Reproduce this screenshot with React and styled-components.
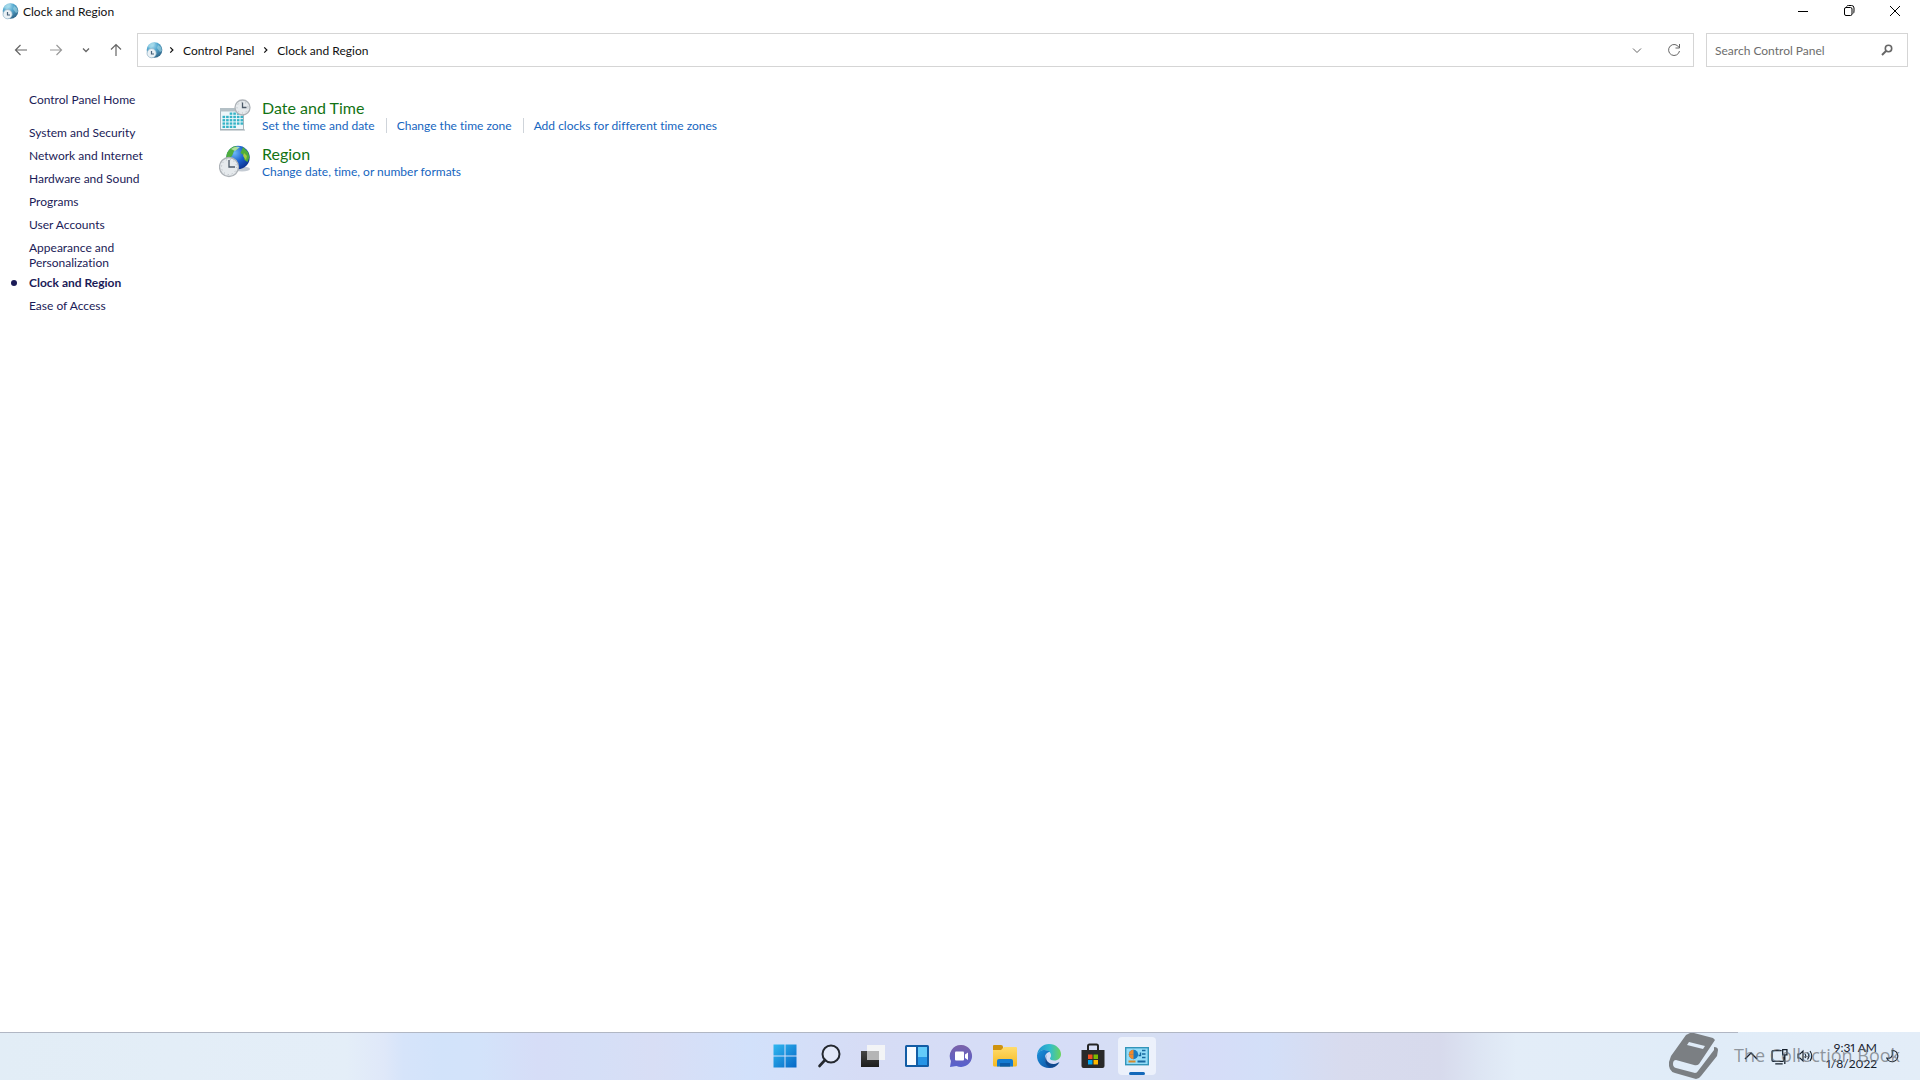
import React from "react";
import styled, { createGlobalStyle } from "styled-components";

const Global = createGlobalStyle`
  *, *::before, *::after { box-sizing: border-box; }
  body { margin: 0; background: #fff; color: #111; font: 12px/15px Lato, "Open Sans", sans-serif; font-variant-ligatures: none; }
  button, input { font: inherit; color: inherit; }
  ul { list-style: none; margin: 0; padding: 0; }
  a { text-decoration: none; color: inherit; }
  svg { display: block; flex: none; }
`;

const Screen = styled.div`
  display: flex;
  flex-direction: column;
  min-height: 100vh;
`;

const TitleBar = styled.header`
  display: flex;
  justify-content: space-between;
  height: 24px;
  padding-right: 2px;
`;

const Title = styled.h1`
  display: flex;
  align-items: center;
  gap: 4px;
  height: 22px;
  margin: 0;
  padding-left: 2px;
  font-size: 12px;
  font-weight: 400;
`;

const Captions = styled.div`
  display: flex;
`;

const IconButton = styled.button`
  display: flex;
  align-items: center;
  justify-content: center;
  flex: none;
  width: ${(p) => p.$w}px;
  height: ${(p) => p.$h || 32}px;
  padding: 0;
  border: 0;
  background: transparent;
  color: ${(p) => p.$color || "#666"};
`;

const NavBar = styled.nav`
  display: flex;
  align-items: center;
  height: 52px;
  padding: 0 12px 0 2px;
`;

const AddressBar = styled.div`
  display: flex;
  align-items: center;
  flex: 1;
  height: 34px;
  margin: 0 12px 0 4px;
  padding-left: 8px;
  border: 1px solid #d5d5d5;
`;

const Crumbs = styled.ol`
  display: flex;
  align-items: center;
  flex: 1;
  gap: 5px;
  list-style: none;
  margin: 0;
  padding: 0 0 0 2px;
`;

const Crumb = styled.li`
  display: flex;
  align-items: center;
  gap: 4px;
  color: #111;
`;

const SearchBox = styled.label`
  display: flex;
  align-items: center;
  width: 202px;
  height: 34px;
  padding: 0 14px 0 8px;
  border: 1px solid #d5d5d5;
  color: #666;
`;

const SearchInput = styled.input`
  flex: 1;
  min-width: 0;
  padding: 0;
  border: 0;
  outline: 0;
  background: transparent;
  &::placeholder { color: #6d6d6d; opacity: 1; }
`;

const Body = styled.div`
  display: flex;
  flex: 1;
`;

const Side = styled.nav`
  width: 219px;
  padding: 16px 72px 0 29px;
  color: #1b1b57;
`;

const SideHome = styled.a`
  display: block;
  margin-bottom: 18px;
  white-space: nowrap;
`;

const SideList = styled.ul`
  display: flex;
  flex-direction: column;
  gap: 8px;
`;

const SideItem = styled.li`
  position: relative;
  font-weight: ${(p) => (p.$current ? 700 : 400)};
  margin-top: ${(p) => (p.$current ? "-3px" : "0")};
  &::before {
    content: "";
    display: ${(p) => (p.$current ? "block" : "none")};
    position: absolute;
    left: -18px;
    top: 5px;
    width: 6px;
    height: 6px;
    border-radius: 50%;
    background: #1b1b57;
  }
`;

const Main = styled.main`
  display: flex;
  flex-direction: column;
  gap: 10px;
  padding-top: 21px;
`;

const Category = styled.section`
  display: flex;
  align-items: flex-end;
  gap: 9px;
  height: 36px;
`;

const CategoryTitle = styled.h2`
  margin: 0;
  color: #137313;
  font-size: 16px;
  line-height: 20px;
  font-weight: 400;
`;

const Tasks = styled.ul`
  display: flex;
  color: #1565c0;
`;

const Task = styled.li`
  & + & {
    margin-left: 11px;
    padding-left: 10px;
    border-left: 1px solid #cfd4da;
  }
`;

const Taskbar = styled.footer`
  display: grid;
  grid-template-columns: 1fr auto 1fr;
  align-items: start;
  height: 48px;
  border-top: 1px solid;
  border-image: linear-gradient(90deg, #b1b7c4 90.5%, transparent 90.5%) 1;
  background: linear-gradient(90deg, #e2edf6 0%, #e4eef8 18%, #dfe8f9 20%, #d6e4fa 21%, #d2e3fa 23%, #d3e3fa 25%, #d6ddf7 28%, #d5dff7 31%, #d8def5 34%, #d2e1fb 39%, #d6dcf5 45%, #d6ddf7 56%, #d6dff3 60%, #d6dcf8 62%, #d3dff8 66%, #d8dbee 70%, #d7daec 75%, #dde5f3 77%, #e3edf8 79%, #e0ecf8 88%, #e3edf8 100%);
`;

const Apps = styled.div`
  grid-column: 2;
  display: flex;
  gap: 6px;
  padding: 4px 0 0 1px;
`;

const AppButton = styled.button`
  position: relative;
  display: flex;
  align-items: center;
  justify-content: center;
  width: 38px;
  height: 38px;
  padding: 0;
  border: 0;
  border-radius: 4px;
  background: ${(p) => (p.$active ? "#ecf1fb" : "transparent")};
  &::after {
    content: "";
    display: ${(p) => (p.$active ? "block" : "none")};
    position: absolute;
    left: 11px;
    bottom: 0;
    width: 16px;
    height: 3px;
    border-radius: 2px;
    background: #1469ba;
  }
`;

const Tray = styled.div`
  position: relative;
  display: flex;
  align-items: center;
  justify-content: flex-end;
  height: 46px;
  padding-right: 19px;
`;

const TrayButton = styled(IconButton)`
  color: #16202c;
`;

const Clock = styled.time`
  width: 56px;
  margin: 0 8px 0 4px;
  line-height: 16px;
  text-align: right;
  font-variant-numeric: proportional-nums;
  color: #16202c;
`;

const Watermark = styled.div`
  position: absolute;
  right: 20px;
  top: 0;
  display: flex;
  align-items: center;
  gap: 14px;
  color: rgba(105, 110, 116, 0.7);
  font: 18px/24px "Open Sans", sans-serif;
  white-space: nowrap;
`;

const WatermarkText = styled.span`
  padding-bottom: 4px;
`;

function Globe() {
  return (
    <svg width="17" height="17" viewBox="0 0 17 17" aria-hidden="true">
      <defs>
        <radialGradient id="gl" cx=".35" cy=".2" r=".9">
          <stop offset="0" stopColor="#b0dff2" /><stop offset=".4" stopColor="#55a9d0" /><stop offset="1" stopColor="#28597c" />
        </radialGradient>
      </defs>
      <circle cx="8.5" cy="8" r="7.8" fill="url(#gl)" />
      <path d="M3 3q3-3 6-2l-1 3-3 2-3-1zM12 3l3 2 1 4-2 1-3-4z" fill="#a5dbe8" opacity=".6" />
      <circle cx="5.600" cy="11.200" r="4.600" fill="#eaf1f5" stroke="#8fb2c6" strokeWidth=".7" />
      <path d="M5.500 9V12H8" fill="none" stroke="#46627a" strokeWidth="1.200" />
    </svg>
  );
}

function Line({ d, size = 16, w = 1 }) {
  return (
    <svg width={size} height={size} viewBox="0 0 16 16" fill="none" stroke="currentColor" strokeWidth={w} aria-hidden="true">
      <path d={d} />
    </svg>
  );
}

function ClockFace({ cx, cy, r }) {
  return (
    <g>
      <circle cx={cx} cy={cy} r={r} fill="#e6eaed" stroke="#aeb3b8" strokeWidth="1.3" />
      <circle cx={cx} cy={cy} r={r - 2} fill="none" stroke="#b3bac0" strokeWidth="1" strokeDasharray="1 3" />
      <path d={`M${cx} ${cy - r + 2.5}V${cy}H${cx + r - 3.5}`} fill="none" stroke="#4d5a68" strokeWidth="1.3" />
    </g>
  );
}

function CalendarIcon() {
  const cells = [];
  for (let y = 0; y < 5; y++)
    for (let x = 0; x < 6; x++)
      if (!(y === 0 && x < 2) && !(y === 4 && x > 3)) cells.push(<rect key={`${x}-${y}`} x={3.5 + x * 3.6} y={13.5 + y * 3.3} width="2.6" height="2.3" fill="#35b3c6" />);
  return (
    <svg width="34" height="34" viewBox="0 0 34 34" aria-hidden="true">
      <rect x="1.5" y="9.5" width="23" height="21" fill="#eef7fa" stroke="#a9b6bd" />
      <path d="M1 9h24v3.500H1z" fill="#b4c0c6" />
      {cells}
      <path d="M1 31h25" stroke="#a2adb3" />
      <ClockFace cx={23.5} cy={8.5} r={7.5} />
    </svg>
  );
}

function RegionIcon() {
  return (
    <svg width="34" height="34" viewBox="0 0 34 34" aria-hidden="true">
      <defs>
        <radialGradient id="rg" cx=".35" cy=".3" r=".8">
          <stop offset="0" stopColor="#6fb9f5" /><stop offset=".5" stopColor="#1c62cf" /><stop offset="1" stopColor="#0b2c86" />
        </radialGradient>
      </defs>
      <ellipse cx="23" cy="24" rx="8" ry="2.5" fill="#c4cbd3" />
      <circle cx="19" cy="12.5" r="11.7" fill="url(#rg)" />
      <path d="M8 8q3-6 9-7l2 3-4 2-2 5-4 3-2-1zM24 2l5 5 1.500 5-2 5-3-2-1-5-3-2z" fill="#4fae3c" />
      <path d="M12 4q4-3 9-2l-5 4z" fill="#c7ecb5" opacity=".8" />
      <path d="M25 8l3 3-1 4-3-4z" fill="#c9d64a" opacity=".7" />
      <ClockFace cx={10} cy={22} r={9.5} />
    </svg>
  );
}

const StartIcon = () => (
  <svg width="24" height="24" viewBox="0 0 24 24" aria-hidden="true">
    <defs><linearGradient id="st" x1="0" y1="0" x2="1" y2="1"><stop offset="0" stopColor="#31b8f0" /><stop offset="1" stopColor="#0667c6" /></linearGradient></defs>
    <path d="M.5.5h11v11H.500zM12.500.5h11v11h-11zM.5 12.500h11v11H.500zM12.500 12.500h11v11h-11z" fill="url(#st)" />
  </svg>
);
const SearchIcon = () => (
  <svg width="24" height="24" viewBox="0 0 24 24" fill="none" stroke="#24282f" aria-hidden="true">
    <circle cx="14" cy="10" r="8.500" strokeWidth="2" fill="#e2e8f8" /><path d="M8 16l-5.500 6" strokeWidth="2.600" strokeLinecap="round" />
  </svg>
);
const TaskViewIcon = () => (
  <svg width="24" height="24" viewBox="0 0 24 24" aria-hidden="true">
    <defs><linearGradient id="tv" x1="0" y1="0" x2="0" y2="1"><stop offset="0" stopColor="#454545" /><stop offset="1" stopColor="#1c1c1c" /></linearGradient></defs>
    <path d="M0 7h18v16H0z" fill="url(#tv)" /><path d="M6 1h18v15H6z" fill="#f3f4f6" /><path d="M6 7h12v9H6z" fill="#b5b5b6" />
  </svg>
);
const WidgetsIcon = () => (
  <svg width="24" height="24" viewBox="0 0 24 24" aria-hidden="true">
    <rect y="1" width="24" height="22" rx="1.500" fill="#125ca5" /><path d="M2 3h9v18H2z" fill="#f8fbff" /><path d="M13 3h9v10h-9z" fill="#64cbfa" /><path d="M13 13h9v8h-9z" fill="#2694e5" />
  </svg>
);
const ChatIcon = () => (
  <svg width="24" height="24" viewBox="0 0 24 24" aria-hidden="true">
    <defs><linearGradient id="ch" x1="0" y1="0" x2="0" y2="1"><stop offset="0" stopColor="#7b62a9" /><stop offset="1" stopColor="#5661ce" /></linearGradient></defs>
    <path d="M12.500 1a11 11 0 1 1-5 21L1 23l1-6A11 11 0 0 1 12.500 1z" fill="url(#ch)" />
    <rect x="6" y="7.500" width="9" height="9" rx="1" fill="#fff" /><path d="M16 10.500l3-2v7.500l-3-2z" fill="#fff" />
  </svg>
);
const FolderIcon = () => (
  <svg width="26" height="24" viewBox="0 0 26 24" aria-hidden="true">
    <defs><linearGradient id="fo" x1="0" y1="0" x2="0" y2="1"><stop offset="0" stopColor="#ffdc6c" /><stop offset="1" stopColor="#f5b921" /></linearGradient></defs>
    <path d="M1 6V2q0-1 1-1h7q2 0 2 2v3z" fill="#cf930f" />
    <path d="M1 6h8l3-3h12q1 0 1 1v17q0 1.500-1.500 1.500h-21Q1 22.500 1 21z" fill="url(#fo)" />
    <path d="M5 22.500V17q0-2 2-2h12q2 0 2 2v5.500z" fill="#147bd1" /><path d="M8 19h10v3.500H8z" fill="#0b5ca8" />
  </svg>
);
const EdgeIcon = () => (
  <svg width="26" height="26" viewBox="0 0 26 26" aria-hidden="true">
    <defs>
      <linearGradient id="e1" x1="0" y1="0" x2="1" y2="0"><stop offset="0" stopColor="#2094d2" /><stop offset=".55" stopColor="#33bccb" /><stop offset="1" stopColor="#6bd45c" /></linearGradient>
      <linearGradient id="e2" x1="0" y1="0" x2="1" y2="1"><stop offset="0" stopColor="#1c92dc" /><stop offset="1" stopColor="#0d4da0" /></linearGradient>
    </defs>
    <path d="M1 12C2 5 7 1 13 1c7 0 12 5 12 10 0 4-3 6.500-6.500 6.500-3 0-4.500-1-4.500-2 0-.8 1-1.200 1-3C15 9 12 7 8.500 7 5 7 2 9 1 12z" fill="url(#e1)" />
    <path d="M1 12.500C1.500 9 5 7 8.500 7c2.500 0 4.500.8 5.500 2-3 0-5 2.500-5 6 0 5 4 9.500 8.500 9.300C16 25 14.500 25 13 25 6 25 .8 19.500 1 12.500z" fill="url(#e2)" />
    <path d="M11 11c-3 6 2 10.500 7 10 2.500-.2 4.500-1.500 5.500-2-1.500 3.500-5 5.500-7.500 5.500-5 0-9.500-6-5-13.500z" fill="#10498e" />
  </svg>
);
const StoreIcon = () => (
  <svg width="24" height="26" viewBox="0 0 24 26" aria-hidden="true">
    <path d="M7 8V3q0-1.500 1.500-1.500h7Q17 1.500 17 3v5" fill="none" stroke="#252525" strokeWidth="2" />
    <path d="M.5 7h23v16q0 2-2 2h-19q-2 0-2-2z" fill="#292929" />
    <path d="M7 11.500h4.500V16H7z" fill="#f25022" /><path d="M12.500 11.500H17V16h-4.500z" fill="#7fba00" /><path d="M7 17h4.500v4.500H7z" fill="#00a4ef" /><path d="M12.500 17H17v4.500h-4.500z" fill="#ffb900" />
  </svg>
);
const PanelIcon = () => (
  <svg width="24" height="20" viewBox="0 0 24 20" aria-hidden="true">
    <rect x=".7" y="1.700" width="22.600" height="17" fill="#93dcf8" stroke="#3295ba" strokeWidth="1.400" />
    <circle cx="8.500" cy="8.500" r="4.700" fill="#187bc0" /><path d="M8.500 8.500H3.800a4.700 4.700 0 0 1 4.700-4.700z" fill="#f0892b" />
    <path d="M8.500 8.500v4.700a4.700 4.700 0 0 1-4.700-4.700z" fill="#f0892b" />
    <path d="M13.500 9.500h2V6.500M17 4.500h3.500M17 8h3.500M17 11.500h3.500" stroke="#1769a0" strokeWidth="1.400" fill="none" /><path d="M3.500 15.500h7" stroke="#d68a2b" strokeWidth="2" /><path d="M12.500 15.500h8" stroke="#1769a0" strokeWidth="2" />
  </svg>
);

const BookIcon = () => (
  <svg width="52" height="47" viewBox="0 0 52 47" aria-hidden="true">
    <path fillRule="evenodd" d="M22 0H26L45 5 47 7 31 31Q29 33 26 32L8 27Q5 27 5 31 5 34 8 35L27 40Q29 40 30 38L46 17V14Q50 14 50 17L49 23 33 43Q31 46 28 46L7 40Q0 38 1 29L3 23 18 2zM21 9L19 12 35 16 37 13z" fill="#7b7f83" />
  </svg>
);

const sections = ["System and Security", "Network and Internet", "Hardware and Sound", "Programs", "User Accounts", "Appearance and Personalization", "Clock and Region", "Ease of Access"];
const categories = [
  { title: "Date and Time", Icon: CalendarIcon, tasks: ["Set the time and date", "Change the time zone", "Add clocks for different time zones"] },
  { title: "Region", Icon: RegionIcon, tasks: ["Change date, time, or number formats"] },
];
const apps = [["Start", StartIcon], ["Search", SearchIcon], ["Task View", TaskViewIcon], ["Widgets", WidgetsIcon], ["Chat", ChatIcon], ["File Explorer", FolderIcon], ["Edge", EdgeIcon], ["Store", StoreIcon], ["Control Panel", PanelIcon]];
const slug = (s) => "#" + s.toLowerCase().replaceAll(" ", "-");

export default function App() {
  return (
    <Screen>
      <Global />
      <TitleBar>
        <Title><Globe />Clock and Region</Title>
        <Captions>
          <IconButton $w={46} $h={21} $color="#000" aria-label="Minimize"><Line d="M3 8.500h10" /></IconButton>
          <IconButton $w={46} $h={21} $color="#000" aria-label="Restore"><Line d="M3.500 6q0-1.500 1.500-1.500h4.500q1.500 0 1.500 1.500v5q0 1.500-1.500 1.500H5q-1.500 0-1.500-1.500zM5.500 3.500q.5-1 2-1h3q2.500 0 2.500 2.500v3q0 2-1 2.500" /></IconButton>
          <IconButton $w={46} $h={21} $color="#000" aria-label="Close"><Line d="M3 3l10 10M13 3L3 13" /></IconButton>
        </Captions>
      </TitleBar>
      <NavBar aria-label="Address">
        <IconButton $w={37} aria-label="Back"><Line d="M14 8H2.500M7.500 3l-5 5 5 5" w={1.2} /></IconButton>
        <IconButton $w={34} $color="#999" aria-label="Forward"><Line d="M2 8h11.500M8.500 3l5 5-5 5" w={1.2} /></IconButton>
        <IconButton $w={26} aria-label="Recent"><Line d="M5 6.500l3 3 3-3" w={1.3} /></IconButton>
        <IconButton $w={34} aria-label="Up"><Line d="M8 14V2.500M3 7.500l5-5 5 5" w={1.2} /></IconButton>
        <AddressBar>
          <Globe />
          <Crumbs>
            <Crumb><Line d="M6 5l3 3-3 3" size={14} w={1.4} /><a href="#control-panel">Control Panel</a></Crumb>
            <Crumb><Line d="M6 5l3 3-3 3" size={14} w={1.4} /><a href="#clock-and-region">Clock and Region</a></Crumb>
          </Crumbs>
          <IconButton $w={36} aria-label="History"><Line d="M4 6.500l4 4 4-4" /></IconButton>
          <IconButton $w={38} aria-label="Refresh"><Line d="M13 5.500A5.500 5.500 0 1 0 13.500 9M13.500 2v4h-4" /></IconButton>
        </AddressBar>
        <SearchBox>
          <SearchInput type="search" aria-label="Search Control Panel" placeholder="Search Control Panel" />
          <svg width="12" height="12" viewBox="0 0 12 12" fill="none" stroke="currentColor" aria-hidden="true"><circle cx="7.500" cy="4.500" r="3.200" strokeWidth="1.600" /><path d="M5 7L1 11" strokeWidth="2" /></svg>
        </SearchBox>
      </NavBar>
      <Body>
        <Side aria-label="Control Panel sections">
          <SideHome href="#home">Control Panel Home</SideHome>
          <SideList>
            {sections.map((s) => <SideItem key={s} $current={s === "Clock and Region"}><a href={slug(s)}>{s}</a></SideItem>)}
          </SideList>
        </Side>
        <Main>
          {categories.map(({ title, Icon, tasks }) => (
            <Category key={title}>
              <Icon />
              <div>
                <CategoryTitle><a href={slug(title)}>{title}</a></CategoryTitle>
                <Tasks>{tasks.map((t) => <Task key={t}><a href={slug(t)}>{t}</a></Task>)}</Tasks>
              </div>
            </Category>
          ))}
        </Main>
      </Body>
      <Taskbar>
        <Apps>
          {apps.map(([name, Icon]) => <AppButton key={name} aria-label={name} $active={name === "Control Panel"}><Icon /></AppButton>)}
        </Apps>
        <Tray>
          <Watermark><BookIcon /><WatermarkText>The Collection Book</WatermarkText></Watermark>
          <TrayButton $w={28} aria-label="Hidden icons"><Line d="M2 11l6-6 6 6" w={1.400} /></TrayButton>
          <TrayButton $w={28} aria-label="Network"><Line d="M10 2.500H2q-1 0-1 1v8q0 1 1 1h9q1 0 1-1V8M4 15h7M11 1.500h4v5h-4zM13 6.500V15" w={1.200} size={17} /></TrayButton>
          <TrayButton $w={24} aria-label="Volume"><Line d="M1 6h2l3-3v10l-3-3H1zM8 6q1.500 2 0 4M10.500 4.500q2.500 3.500 0 7M13 3q3.500 5 0 10" w={1.100} /></TrayButton>
          <Clock>9:31 AM<br />1/8/2022</Clock>
          <TrayButton $w={16} aria-label="Focus assist"><Line d="M7 1.500a6.500 6.500 0 1 1-6 9q5 .500 6-3 .500-2 0-6z" w={1.300} size={14} /></TrayButton>
        </Tray>
      </Taskbar>
    </Screen>
  );
}
